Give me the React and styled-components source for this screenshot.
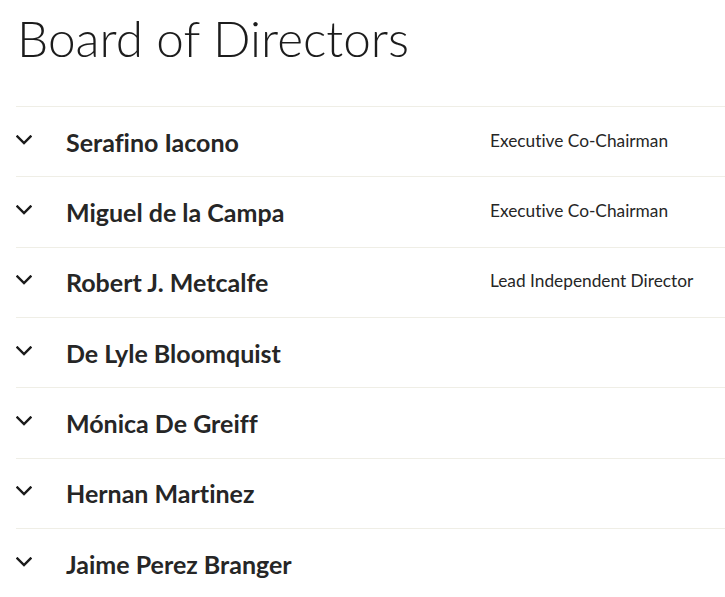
import React from "react";
import styled, { createGlobalStyle } from "styled-components";

const GlobalStyle = createGlobalStyle`
    body {
        margin: 0;
        background: #ffffff;
        font-family: Lato, "Liberation Sans", sans-serif;
        color: #222222;
        font-variant-ligatures: none;
    }
`;

const directors = [
    { name: "Serafino Iacono", role: "Executive Co-Chairman" },
    { name: "Miguel de la Campa", role: "Executive Co-Chairman" },
    { name: "Robert J. Metcalfe", role: "Lead Independent Director" },
    { name: "De Lyle Bloomquist", role: "" },
    { name: "Mónica De Greiff", role: "" },
    { name: "Hernan Martinez", role: "" },
    { name: "Jaime Perez Branger", role: "" },
];

const Chevron = () => (
    <svg width="16" height="10" viewBox="0 0 16 10" fill="none">
        <path
            d="M1.5 1.5 L8 8 L14.5 1.5"
            stroke="#1a1a1a"
            strokeWidth="2.4"
            strokeLinecap="square"
        />
    </svg>
);

const App = () => {
    return (
        <Page>
            <GlobalStyle />
            <Title>Board of Directors</Title>
            <List>
                {directors.map((d) => (
                    <Row key={d.name}>
                        <Toggle>
                            <Chevron />
                        </Toggle>
                        <Name>{d.name}</Name>
                        <Role>{d.role}</Role>
                    </Row>
                ))}
            </List>
        </Page>
    );
};

const Page = styled.div`
    padding: 8px 0 0 16px;
`;

const Title = styled.h1`
    margin: 0 0 0 1px;
    font-family: Lato, "Liberation Sans", sans-serif;
    font-weight: 300;
    font-size: 49.5px;
    line-height: 60px;
    color: #1c1c1c;
`;

const List = styled.div`
    margin-top: 38px;
    border-top: 1px solid #efeee6;
`;

const Row = styled.div`
    box-sizing: border-box;
    display: flex;
    align-items: center;
    height: 70.33px;
    border-bottom: 1px solid #efeee6;
    &:last-child {
        border-bottom: none;
    }
`;

const Toggle = styled.div`
    width: 50px;
    display: flex;
    align-items: center;
    padding-bottom: 4px;
`;

const Name = styled.div`
    width: 424px;
    font-weight: 700;
    font-size: 25px;
    color: #262626;
`;

const Role = styled.div`
    font-size: 17.3px;
    color: #262626;
    padding-bottom: 3px;
`;

export default App;
